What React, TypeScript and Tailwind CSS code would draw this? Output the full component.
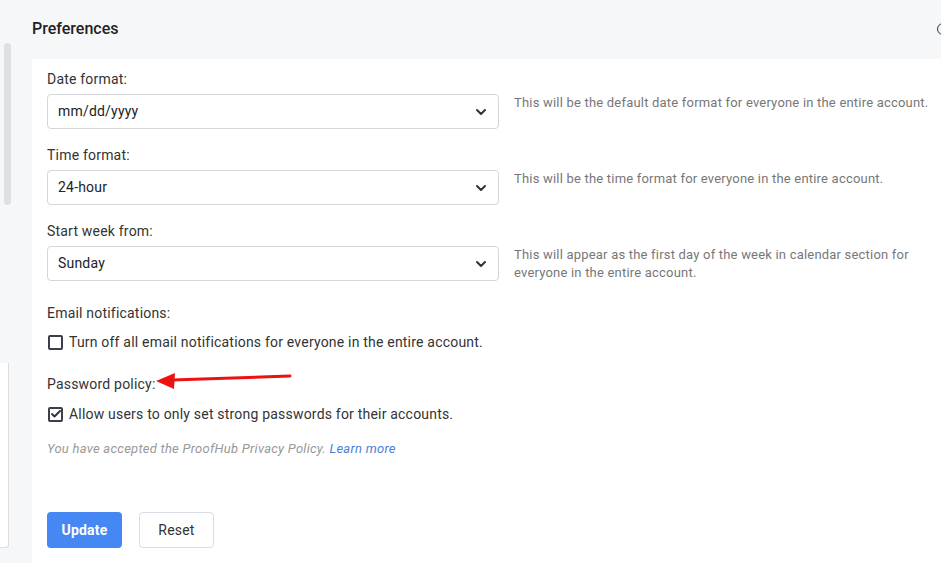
import React from 'react';

const fields = [
  { label: 'Date format:', value: 'mm/dd/yyyy', hint: 'This will be the default date format for everyone in the entire account.' },
  { label: 'Time format:', value: '24-hour', hint: 'This will be the time format for everyone in the entire account.' },
  {
    label: 'Start week from:',
    value: 'Sunday',
    hint: 'This will appear as the first day of the week in calendar section for everyone in the entire account.',
  },
];

function Chevron() {
  return (
    <svg width="12" height="8" viewBox="0 0 12 8" fill="none">
      <path d="M2 2l4 4 4-4" stroke="#333" strokeWidth="2" strokeLinecap="round" strokeLinejoin="round" />
    </svg>
  );
}

function Check({ checked, label }: { checked?: boolean; label: string }) {
  return (
    <label className="flex items-center h-5 gap-[6px] text-[14px] tracking-[0.2px] text-[#333]">
      <span className="ml-[1px] w-[15px] h-[15px] border-2 border-[#3a3f4a] rounded-[2px] bg-white flex items-center justify-center">
        {checked && (
          <svg width="10" height="8" viewBox="0 0 10 8" fill="none">
            <path d="M1 4l2.5 2.5L9 1" stroke="#2b2f36" strokeWidth="1.8" strokeLinecap="round" strokeLinejoin="round" />
          </svg>
        )}
      </span>
      {label}
    </label>
  );
}

export default function App() {
  return (
    <div
      className="relative w-[941px] h-[563px] overflow-hidden bg-[#f6f7f9] flex"
      style={{ fontFamily: 'Roboto, "Liberation Sans", sans-serif' }}
    >
      {/* left rail */}
      <div className="w-[32px] shrink-0 flex flex-col">
        <div className="mt-[43px] ml-[4px] w-[7px] h-[162px] rounded-full bg-[#dfe0e3]" />
        <div className="mt-[158px] w-[9px] h-[185px] bg-white border-r border-b border-[#dcdde0] rounded-br-[3px]" />
      </div>

      <div className="flex-1 flex flex-col min-w-0">
        <div className="h-[59px] flex items-center justify-between">
          <h2 className="text-[16px] font-medium text-[#222] -mt-[2px]">Preferences</h2>
          <span className="w-[12px] h-[12px] rounded-full border-[1.5px] border-[#333] -mr-[8px] -mt-[2px]" />
        </div>

        <div className="flex-1 bg-white pl-[15px] pt-[10px] tracking-[0.2px]">
          {fields.map((f, i) => (
            <div key={f.label} className={i > 0 ? 'mt-[16px]' : ''}>
              <div className="h-5 leading-5 text-[14px] text-[#333]">{f.label}</div>
              <div className="mt-[5px] flex gap-[15px]">
                <div className="w-[452px] h-[35px] shrink-0 border border-[#d4d6da] rounded-[4px] flex items-center justify-between pl-[10px] pr-[11px] text-[14px] text-[#222]">
                  <span>{f.value}</span>
                  <Chevron />
                </div>
                <p className="text-[13px] leading-[18px] text-[#777] pr-[10px]">{f.hint}</p>
              </div>
            </div>
          ))}

          <div className="mt-[21px] h-5 leading-5 text-[14px] text-[#333]">Email notifications:</div>
          <div className="mt-[9px]">
            <Check label="Turn off all email notifications for everyone in the entire account." />
          </div>

          <div className="mt-[22px] h-5 leading-5 text-[14px] text-[#333]">Password policy:</div>
          <div className="mt-[10px]">
            <Check checked label="Allow users to only set strong passwords for their accounts." />
          </div>

          <p className="mt-[16px] text-[13px] leading-[18px] italic text-[#999] tracking-[0.25px]">
            You have accepted the ProofHub Privacy Policy. <span className="text-[#4a7fd8]">Learn more</span>
          </p>

          <div className="mt-[54px] flex gap-[17px]">
            <button className="w-[75px] h-[36px] rounded-[4px] bg-[#4587f3] text-white text-[14px] font-bold">Update</button>
            <button className="w-[75px] h-[36px] rounded-[4px] bg-white border border-[#dcdde0] text-[#333] text-[14px]">Reset</button>
          </div>
        </div>
      </div>

      {/* red annotation arrow */}
      <svg className="absolute left-0 top-0 pointer-events-none" width="941" height="563">
        <path d="M290 376 L172 380" stroke="#ee1111" strokeWidth="3" strokeLinecap="round" />
        <path d="M156 381 L175 373 L174 389 Z" fill="#ee1111" />
      </svg>
    </div>
  );
}
